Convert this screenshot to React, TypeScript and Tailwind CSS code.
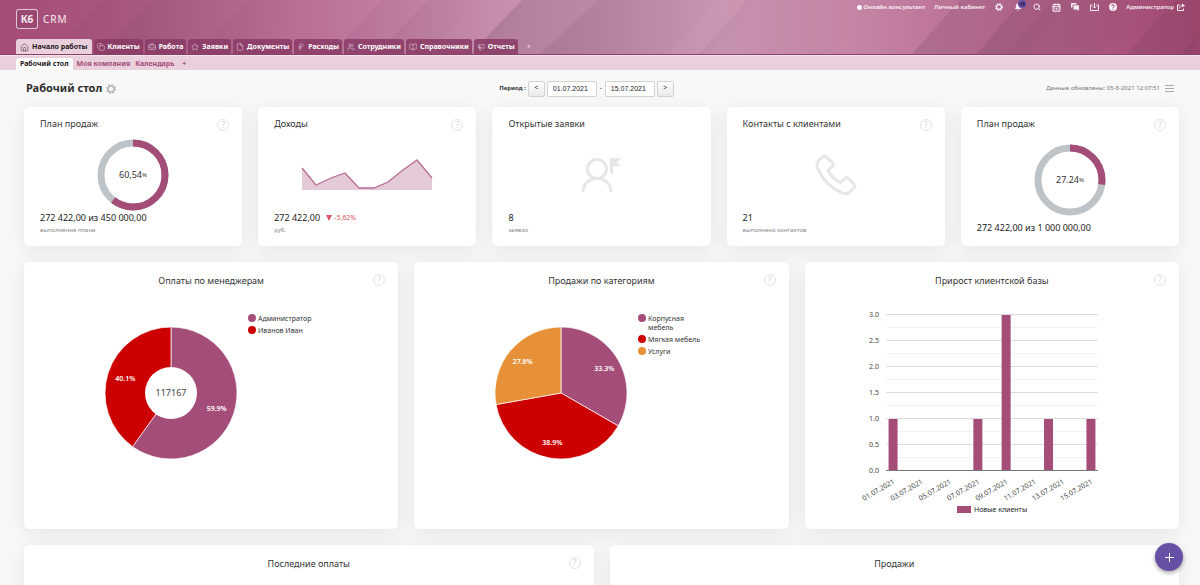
import type { ReactNode } from "react";
import {
  BookOpen,
  BriefcaseBusiness,
  CalendarDays,
  Copy,
  File,
  House,
  Megaphone,
  RussianRuble,
  Search,
  Star,
  Users,
} from "lucide-react";
import type { LucideIcon } from "lucide-react";

const PLUM = "#a54d79";
const RED = "#cc0000";
const ORANGE = "#e69138";

type Tab = { label: string; icon: LucideIcon };

const tabs: Tab[] = [
  { label: "Клиенты", icon: Copy },
  { label: "Работа", icon: BriefcaseBusiness },
  { label: "Заявки", icon: Star },
  { label: "Документы", icon: File },
  { label: "Расходы", icon: RussianRuble },
  { label: "Сотрудники", icon: Users },
  { label: "Справочники", icon: BookOpen },
  { label: "Отчеты", icon: Megaphone },
];

type Slice = { value: number; color: string; legend: string[] };

const managers: Slice[] = [
  { value: 59.9, color: PLUM, legend: ["Администратор"] },
  { value: 40.1, color: RED, legend: ["Иванов Иван"] },
];

const categories: Slice[] = [
  { value: 33.3, color: PLUM, legend: ["Корпусная", "мебель"] },
  { value: 38.9, color: RED, legend: ["Мягкая мебель"] },
  { value: 27.8, color: ORANGE, legend: ["Услуги"] },
];

// new clients by day of the month, 1..15
const newClients = [1, 0, 0, 0, 0, 0, 1, 0, 3, 0, 0, 1, 0, 0, 1];

function polar(cx: number, cy: number, r: number, share: number) {
  const a = share * Math.PI * 2 - Math.PI / 2;
  return [cx + r * Math.cos(a), cy + r * Math.sin(a)];
}

function HeaderBackdrop() {
  return (
    <svg
      className="absolute inset-0 h-full w-full"
      viewBox="0 0 1200 54"
      preserveAspectRatio="none"
      aria-hidden="true"
    >
      <defs>
        <linearGradient id="sky" x1="0" x2="1" y1="0" y2="0">
          <stop offset="0" stopColor="#a54b78" />
          <stop offset="0.1" stopColor="#aa5780" />
          <stop offset="0.25" stopColor="#bb7097" />
          <stop offset="0.42" stopColor="#c990b0" />
          <stop offset="0.6" stopColor="#cd98b5" />
          <stop offset="0.72" stopColor="#c483a4" />
          <stop offset="0.86" stopColor="#b5648d" />
          <stop offset="1" stopColor="#9f466f" />
        </linearGradient>
        <linearGradient id="fade" x1="0" x2="1" y1="0" y2="0">
          <stop offset="0" stopColor="#55304a" stopOpacity="0.22" />
          <stop offset="1" stopColor="#55304a" stopOpacity="0" />
        </linearGradient>
      </defs>
      <rect width="1200" height="54" fill="url(#sky)" />
      <g fill="url(#fade)">
        <polygon points="103,0 240,0 190,54 50,54" opacity="0.3" />
        <polygon points="153,0 300,0 250,54 100,54" opacity="0.4" />
        <polygon points="247,0 380,0 330,54 194,54" opacity="0.3" />
        <polygon points="382,0 480,0 430,54 330,54" opacity="0.4" />
        <polygon points="428,0 530,0 480,54 376,54" opacity="0.4" />
        <polygon points="522,0 720,0 670,54 470,54" />
        <polygon points="598,0 760,0 710,54 540,54" opacity="0.6" />
        <polygon points="747,0 880,0 830,54 699,54" opacity="0.3" />
        <polygon points="960,0 1080,0 1030,54 912,54" opacity="0.8" />
        <polygon points="1022,0 1150,0 1100,54 977,54" opacity="0.8" />
        <polygon points="1053,0 1160,0 1110,54 1007,54" opacity="0.3" />
        <polygon points="1175,0 1260,0 1210,54 1127,54" opacity="0.6" />
        <polygon points="1200,32 1200,54 1182,54" opacity="0.9" />
      </g>
    </svg>
  );
}

function Gear({ size, className }: { size: number; className?: string }) {
  return (
    <svg width={size} height={size} viewBox="0 0 20 20" fill="none" stroke="currentColor" className={className}>
      <circle cx="10" cy="10" r="6" strokeWidth="3" />
      <circle cx="10" cy="10" r="8.500" strokeWidth="3" strokeDasharray="3.340 3.340" />
    </svg>
  );
}

function IconButton({ label, children }: { label: string; children: ReactNode }) {
  return (
    <button type="button" aria-label={label} title={label} className="relative flex w-2 justify-center">
      {children}
    </button>
  );
}

function TopLinks() {
  return (
    <div className="flex h-[14px] items-center text-[6px] font-semibold text-white/90">
      <a href="#consultant" className="flex items-center gap-[2px]">
        <span className="size-[5px] rounded-full bg-white" />
        Онлайн консультант
      </a>
      <a href="#cabinet" className="ml-[9px]">
        Личный кабинет
      </a>
      <div className="ml-[10px] flex items-center gap-[11px]">
        <IconButton label="Настройки">
          <Gear size={8} />
        </IconButton>
        <IconButton label="Уведомления">
          <svg width="8" height="8" viewBox="0 0 16 16" fill="currentColor">
            <path d="M8 1c-3 0-4 2.300-4 5 0 3-1 4.500-3 6h14c-2-1.500-3-3-3-6 0-2.700-1-5-4-5zM6 13h4a2 2 0 0 1-4 0z" />
          </svg>
          <span className="absolute -top-[3px] left-1 flex size-2 items-center justify-center rounded-full bg-[#6650a5] text-[5px] leading-none text-[#2b1746]">
            48
          </span>
        </IconButton>
        <IconButton label="Поиск">
          <Search size={8} strokeWidth={3} />
        </IconButton>
        <IconButton label="Календарь">
          <CalendarDays size={9} strokeWidth={3} className="shrink-0" />
        </IconButton>
        <IconButton label="Сообщения">
          <svg width="8" height="8" viewBox="0 0 16 16" fill="currentColor">
            <path d="M1 0h9a1 1 0 0 1 1 1v2H5a2 2 0 0 0-2 2v4H1a1 1 0 0 1-1-1V1a1 1 0 0 1 1-1z" />
            <path d="M6 4.500h9a1 1 0 0 1 1 1V12a1 1 0 0 1-1 1v3l-3.500-3H6a1 1 0 0 1-1-1V5.500a1 1 0 0 1 1-1z" />
          </svg>
        </IconButton>
        <IconButton label="Загрузки">
          <svg width="9" height="8" viewBox="0 0 18 16" fill="none" stroke="currentColor" strokeWidth="2" className="shrink-0">
            <path d="M5 4H1v11h16V4h-4M9 0v10M6 7l3 3 3-3" />
          </svg>
        </IconButton>
        <IconButton label="Справка">
          <svg width="8" height="8" viewBox="0 0 16 16">
            <circle cx="8" cy="8" r="8" fill="currentColor" />
            <path d="M5.500 6a2.500 2.500 0 1 1 3.500 2.300c-.8.400-1 .7-1 1.700M8 11.500v2" fill="none" stroke={PLUM} strokeWidth="2" />
          </svg>
        </IconButton>
      </div>
      <a href="#logout" className="ml-[9px] flex items-center gap-[3px]">
        Администратор
        <svg width="8" height="8" viewBox="0 0 16 16" fill="none" stroke="currentColor" strokeWidth="2">
          <path d="M6 4H1v11h12v-4" />
          <path d="M5 11c0-4 3-6 6-6" />
          <path d="M10 1l6 4-6 4z" fill="currentColor" stroke="none" />
        </svg>
      </a>
    </div>
  );
}

function Header() {
  return (
    <header className="relative h-[55px] shrink-0 border-b border-[#8f3f68]">
      <HeaderBackdrop />
      <div className="relative flex h-full flex-col justify-between">
        <div className="flex items-start justify-between pr-[15px] pl-4">
          <a href="#home" className="mt-[9px] flex items-center gap-[5px] text-white/90">
            <span className="flex h-5 w-[22px] items-center justify-center rounded-[3px] border border-white/70 bg-[#8d4069]/50 text-[10px] font-bold">
              К6
            </span>
            <span className="text-[10px] tracking-widest">CRM</span>
          </a>
          <TopLinks />
        </div>
        <nav className="flex items-end gap-[2px] pl-4 text-[7px] font-bold">
          <a
            href="#start"
            className="flex h-[15px] items-center gap-[3px] rounded-t-[3px] bg-[#ead0dc] px-1 pt-px text-[#231720]"
          >
            <House size={9} strokeWidth={2} className="text-[#6d5563]" />
            Начало работы
          </a>
          {tabs.map(({ label, icon: Icon }) => (
            <a
              key={label}
              href={`#${label}`}
              className="flex h-[15px] items-center gap-[3px] rounded-t-[3px] bg-[#8a3b65]/85 px-[3px] pt-px text-white"
            >
              <Icon size={8} strokeWidth={2} className="text-white/60" />
              {label}
            </a>
          ))}
          <button type="button" aria-label="Добавить раздел" className="ml-[7px] h-[15px] pt-px text-white/60">
            +
          </button>
        </nav>
      </div>
    </header>
  );
}

function SubNav() {
  return (
    <nav className="flex h-[15px] shrink-0 items-end gap-1 border-t border-[#f3e3ea] bg-[#ead0dc] pl-4 text-[7px] font-bold text-[#a54d79]">
      <a href="#desktop" className="flex h-3 items-center rounded-t-[3px] bg-white px-1 text-[#231720]">
        Рабочий стол
      </a>
      <a href="#company" className="flex h-3 items-center">
        Моя компания
      </a>
      <a href="#calendar" className="ml-px flex h-3 items-center">
        Календарь
      </a>
      <button type="button" aria-label="Добавить вкладку" className="ml-1 h-3">
        +
      </button>
    </nav>
  );
}

function StepButton({ label, children }: { label: string; children: string }) {
  return (
    <button
      type="button"
      aria-label={label}
      className="flex h-4 w-[17px] items-center justify-center rounded-xs border border-[#d2d2d2] bg-linear-to-b from-white to-[#e9e9e9] text-[7px] text-[#444]"
    >
      {children}
    </button>
  );
}

function Toolbar() {
  const field =
    "h-4 w-[50px] rounded-xs border border-[#d2d2d2] bg-white px-[5px] font-['Liberation_Sans',sans-serif] text-[7px] text-[#222]";
  return (
    <div className="grid h-[37px] grid-cols-[1fr_auto_1fr] items-center">
      <h1 className="flex items-center gap-1 pl-[2px] text-[11px] font-bold text-[#2d2d2d]">
        Рабочий стол
        <button type="button" aria-label="Настроить рабочий стол">
          <Gear size={10} className="text-[#b5b5b5]" />
        </button>
      </h1>
      <div className="mr-[30px] flex items-center gap-[2px]">
        <label htmlFor="from" className="text-[6px] font-bold text-[#333]">
          Период :
        </label>
        <StepButton label="Предыдущий период">&lt;</StepButton>
        <input id="from" className={field} defaultValue="01.07.2021" />
        <span className="w-1 text-center text-[7px]">-</span>
        <input aria-label="Конец периода" className={field} defaultValue="15.07.2021" />
        <StepButton label="Следующий период">&gt;</StepButton>
      </div>
      <div className="flex items-center justify-end gap-[5px] pr-[5px] text-[6px] text-[#777]">
        Данные обновлены: 05-8-2021 12:07:51
        <button type="button" aria-label="Меню" className="flex w-[9px] flex-col gap-[2px]">
          <span className="h-px w-full bg-[#aaa]" />
          <span className="h-px w-full bg-[#aaa]" />
          <span className="h-px w-full bg-[#aaa]" />
        </button>
      </div>
    </div>
  );
}

function HelpButton() {
  return (
    <button
      type="button"
      aria-label="Подсказка"
      className="absolute top-3 right-[13px] flex size-3 items-center justify-center rounded-full border border-[#e4e4e4] text-[8px] leading-none text-[#d5d5d5]"
    >
      ?
    </button>
  );
}

const cardClass =
  "relative flex flex-col rounded-[5px] bg-white shadow-[0_4px_20px_rgba(0,0,0,0.08)]";

type StatProps = {
  title: string;
  value: string;
  note?: string;
  delta?: string;
  help?: boolean;
  children: ReactNode;
};

function StatCard({ title, value, note, delta, help = true, children }: StatProps) {
  return (
    <section className={`${cardClass} h-[139px] px-4 pt-[10px] pb-[11px]`}>
      <h2 className="text-[9px] leading-[14px] text-[#333]">{title}</h2>
      {help ? <HelpButton /> : null}
      <div className="flex min-h-0 flex-1 items-center justify-center pt-[7px]">{children}</div>
      <div className="flex items-center gap-[6px] text-[9px] leading-[14px] text-[#222]">
        {value}
        {delta ? (
          <span className="flex items-center gap-[2px] text-[7px] text-[#e05561]">
            <svg width="6" height="6" viewBox="0 0 6 6" fill="currentColor">
              <path d="M0 0h6L3 6z" />
            </svg>
            {delta}
          </span>
        ) : null}
      </div>
      {note ? <div className="text-[6px] leading-[10px] text-[#8a8a8a]">{note}</div> : null}
    </section>
  );
}

function Ring({ share, label }: { share: number; label: string }) {
  const r = 32;
  const len = 2 * Math.PI * r;
  return (
    <svg width="72" height="72" viewBox="0 0 72 72" className="shrink-0">
      <circle cx="36" cy="36" r={r} fill="none" stroke="#bdc3c7" strokeWidth="7" />
      <circle
        cx="36"
        cy="36"
        r={r}
        fill="none"
        stroke={PLUM}
        strokeWidth="7"
        strokeDasharray={`${len * share} ${len}`}
        transform="rotate(-90 36 36)"
      />
      <text x="36" y="39" textAnchor="middle" fontSize="9" fill="#333">
        {label}
        <tspan fontSize="6" dy="-1">%</tspan>
      </text>
    </svg>
  );
}

function IncomeChart() {
  const line = "1,9 15,26 30,19 44,14 58,29 73,29 87,23 102,11 116,1 131,19";
  return (
    <svg width="132" height="32" viewBox="0 0 132 32">
      <polygon points={`1,31 ${line} 131,31`} fill="#e4cad7" />
      <polyline points={line} fill="none" stroke="#b96d94" strokeWidth="1.300" />
    </svg>
  );
}

function ChartCard({ title, help = true, children }: { title: string; help?: boolean; children?: ReactNode }) {
  return (
    <section className={`${cardClass} h-[267px] items-center pt-3`}>
      <h2 className="text-[9px] leading-[14px] text-[#333]">{title}</h2>
      {help ? <HelpButton /> : null}
      {children}
    </section>
  );
}

function PieChart({ slices, hole = 0, total }: { slices: Slice[]; hole?: number; total?: string }) {
  const cx = 110;
  const cy = 105;
  const r = 66;
  let start = 0;
  let row = 30;
  return (
    <svg width="300" height="200" viewBox="0 0 300 200">
      {slices.map((slice) => {
        const from = start;
        const to = from + slice.value / 100;
        start = to;
        const [x1, y1] = polar(cx, cy, r, from);
        const [x2, y2] = polar(cx, cy, r, to);
        const [tx, ty] = polar(cx, cy, hole ? 48 : 50, (from + to) / 2);
        const big = to - from > 0.5 ? 1 : 0;
        return (
          <g key={slice.color}>
            <path
              d={`M${cx} ${cy}L${x1} ${y1}A${r} ${r} 0 ${big} 1 ${x2} ${y2}Z`}
              fill={slice.color}
              stroke="#fff"
              strokeWidth="0.700"
            />
            <text x={tx} y={ty + 3} textAnchor="middle" fontSize="7" fontWeight="600" fill="#fff">
              {slice.value}%
            </text>
          </g>
        );
      })}
      {hole ? <circle cx={cx} cy={cy} r={hole} fill="#fff" /> : null}
      {total ? (
        <text x={cx} y={cy + 3} textAnchor="middle" fontSize="9" fill="#444">
          {total}
        </text>
      ) : null}
      {slices.map((slice) => {
        const y = row;
        row += 12 + (slice.legend.length - 1) * 9;
        return (
          <g key={slice.color}>
            <circle cx="191" cy={y} r="4" fill={slice.color} />
            {slice.legend.map((text, i) => (
              <text key={text} x="197" y={y + 3 + i * 9} fontSize="7" fill="#333">
                {text}
              </text>
            ))}
          </g>
        );
      })}
    </svg>
  );
}

function BarChart() {
  const left = 44;
  const right = 256;
  const base = 183;
  const unit = 52;
  const step = (right - left) / newClients.length;
  const ticks = [0, 0.5, 1, 1.5, 2, 2.5, 3];
  return (
    <svg width="300" height="236" viewBox="0 0 300 236">
      {ticks.map((t) => (
        <g key={t}>
          <rect x={left} y={base - t * unit - 1} width={right - left} height="1" fill="#dcdcdc" />
          {t < 3 ? (
            <rect x={left} y={base - (t + 0.25) * unit - 1} width={right - left} height="1" fill="#f2f2f2" />
          ) : null}
          <text x="37" y={base - t * unit + 2} textAnchor="end" fontSize="7" fill="#444">
            {t.toFixed(1)}
          </text>
        </g>
      ))}
      {newClients.map((n, i) =>
        n > 0 ? (
          <rect key={i} x={left + step * (i + 0.5) - 4.5} y={base - n * unit} width="9" height={n * unit} fill={PLUM} />
        ) : null,
      )}
      <rect x={left} y={base - 1} width={right - left} height="1" fill="#777" />
      {newClients.map((_, i) => {
        if (i % 2) return null;
        const x = left + step * (i + 0.5) + 2;
        const y = base + 12;
        return (
          <text key={i} x={x} y={y} textAnchor="end" fontSize="7" fill="#444" transform={`rotate(-30 ${x} ${y})`}>
            {String(i + 1).padStart(2, "0")}.07.2021
          </text>
        );
      })}
      <rect x="115" y="218" width="14" height="7" fill={PLUM} />
      <text x="132" y="224" fontSize="7" fill="#222">
        Новые клиенты
      </text>
    </svg>
  );
}

function FlagPersonIcon() {
  return (
    <svg width="40" height="36" viewBox="0 0 40 36" fill="none" stroke="#e6e6e6" strokeWidth="3">
      <circle cx="16" cy="12" r="9.500" />
      <path d="M2 35c0-8 6-13.500 14-13.500S30 27 30 35" />
      <path d="M29 1h11l-4 4 4 4h-8v8h-3z" fill="#e6e6e6" stroke="none" />
    </svg>
  );
}

function HandsetIcon() {
  return (
    <svg width="42" height="42" viewBox="0 0 42 42" fill="none" stroke="#e6e6e6" strokeWidth="3" strokeLinejoin="round">
      <path d="M8 2.500Q9.500 1.500 11 2.800L17.500 9Q18.800 10.500 17.500 12L13 16.500Q17 24.500 25.500 28.500L30 24.300Q31.500 23 33 24.300L39.300 30.500Q40.500 32 39.300 33.500L35 38Q32 40.500 27.500 39Q10 32 2.500 14Q1 9.500 3.500 7Z" />
    </svg>
  );
}

export default function App() {
  return (
    <div className="flex h-screen flex-col overflow-hidden bg-[#f8f8f8] font-['Noto_Sans','Open_Sans',sans-serif] text-[#333]">
      <Header />
      <SubNav />
      <main className="flex-1 overflow-hidden pr-[21px] pl-6">
        <Toolbar />
        <div className="grid grid-cols-5 gap-4">
          <StatCard title="План продаж" value="272 422,00 из 450 000,00" note="выполнение плана">
            <Ring share={0.6054} label="60,54" />
          </StatCard>
          <StatCard title="Доходы" value="272 422,00" delta="-5,62%" note="руб.">
            <IncomeChart />
          </StatCard>
          <StatCard title="Открытые заявки" value="8" note="заявок" help={false}>
            <FlagPersonIcon />
          </StatCard>
          <StatCard title="Контакты с клиентами" value="21" note="выполнено контактов">
            <HandsetIcon />
          </StatCard>
          <StatCard title="План продаж" value="272 422,00 из 1 000 000,00">
            <Ring share={0.2724} label="27.24" />
          </StatCard>
        </div>
        <div className="mt-4 grid grid-cols-3 gap-4">
          <ChartCard title="Оплаты по менеджерам">
            <PieChart slices={managers} hole={26} total="117167" />
          </ChartCard>
          <ChartCard title="Продажи по категориям">
            <PieChart slices={categories} />
          </ChartCard>
          <ChartCard title="Прирост клиентской базы">
            <BarChart />
          </ChartCard>
        </div>
        <div className="mt-4 grid grid-cols-2 gap-4">
          <ChartCard title="Последние оплаты" />
          <ChartCard title="Продажи" help={false} />
        </div>
      </main>
      <button
        type="button"
        aria-label="Добавить"
        className="fixed right-[17px] bottom-[14px] flex size-7 items-center justify-center rounded-full bg-[#6650a5] text-white shadow-[0_2px_4px_rgba(0,0,0,0.35)]"
      >
        <svg width="9" height="9" viewBox="0 0 9 9" stroke="currentColor">
          <path d="M4.500 0v9M0 4.500h9" />
        </svg>
      </button>
    </div>
  );
}
